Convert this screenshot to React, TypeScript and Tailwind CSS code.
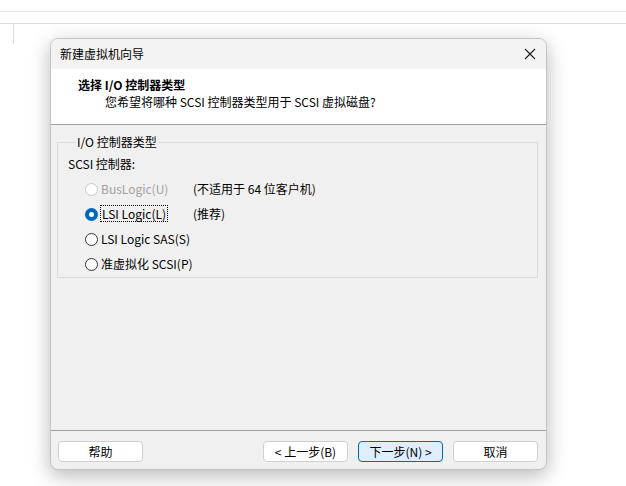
import React from "react";

const font = { fontFamily: '"Noto Sans CJK SC", "Noto Sans", sans-serif' };

function Radio({ checked, disabled }: { checked?: boolean; disabled?: boolean }) {
  if (checked) {
    return (
      <span className="w-[13px] h-[13px] rounded-full bg-[#0067c0] flex items-center justify-center shrink-0">
        <span className="w-[5px] h-[5px] rounded-full bg-white" />
      </span>
    );
  }
  return (
    <span
      className={
        "w-[13px] h-[13px] rounded-full bg-white border shrink-0 " +
        (disabled ? "border-[#c8c8c8] bg-[#f5f5f5]" : "border-[#333333]")
      }
    />
  );
}

function Btn({ children, primary }: { children: React.ReactNode; primary?: boolean }) {
  return (
    <div
      className={
        "w-[85px] h-[21px] rounded-[4px] border flex items-center justify-center text-[12px] text-black " +
        (primary ? "bg-[#e0eef9] border-[#0067c0]" : "bg-white border-[#d0d0d0]")
      }
    >
      {children}
    </div>
  );
}

export default function App() {
  return (
    <div className="w-[626px] h-[486px] bg-white overflow-hidden" style={font}>
      <div className="h-[12px] border-b border-[#e8e8e8]" />
      <div className="h-[12px] border-b border-[#dedede]" />
      <div className="flex items-start">
        <div className="ml-[13px] w-px h-[20px] bg-[#dedede]" />
        <div className="ml-[36px] mt-[14px] w-[497px] h-[432px] rounded-[8px] border border-[#c4c4c4] bg-[#f0f0f0] shadow-[0_6px_20px_rgba(0,0,0,0.28)] flex flex-col overflow-hidden">
          {/* title bar */}
          <div className="h-[30px] bg-[#f3f3f3] flex items-center justify-between pl-[9px] pr-[9px] shrink-0">
            <span className="text-[12px] text-black leading-none">新建虚拟机向导</span>
            <svg width="12" height="12" viewBox="0 0 12 12" className="mr-[1px]">
              <path d="M1 1 L11 11 M11 1 L1 11" stroke="#1a1a1a" strokeWidth="1.1" fill="none" />
            </svg>
          </div>
          {/* header */}
          <div className="h-[56px] bg-white border-b border-[#a0a0a0] pl-[27px] pt-[8px] shrink-0">
            <div className="text-[12px] font-bold text-black leading-[16px]">选择 I/O 控制器类型</div>
            <div className="text-[12px] text-black leading-[16px] pl-[27px] mt-[1px]">您希望将哪种 SCSI 控制器类型用于 SCSI 虚拟磁盘?</div>
          </div>
          {/* body */}
          <div className="flex-1 pl-[6px] pr-[8px] pt-[9px]">
            <fieldset className="w-[481px] h-[144px] border border-[#dcdcdc] pl-[10px] pt-[6px]">
              <legend className="text-[12px] text-black leading-[16px] ml-[8px] px-[1px]">I/O 控制器类型</legend>
              <div className="text-[12px] text-black leading-[16px]">SCSI 控制器:</div>
              <div className="flex flex-col mt-[9px] ml-[17px] gap-[9px]">
                <div className="flex items-center h-[16px]">
                  <Radio disabled />
                  <span className="ml-[3px] text-[12px] text-[#a0a0a0] w-[92px]">BusLogic(U)</span>
                  <span className="text-[12px] text-black">(不适用于 64 位客户机)</span>
                </div>
                <div className="flex items-center h-[16px]">
                  <Radio checked />
                  <span className="ml-[2px] text-[12px] text-black w-[93px]">
                    <span className="border border-dotted border-black px-[1px] leading-[15px] inline-block">LSI Logic(L)</span>
                  </span>
                  <span className="text-[12px] text-black">(推荐)</span>
                </div>
                <div className="flex items-center h-[16px]">
                  <Radio />
                  <span className="ml-[3px] text-[12px] text-black">LSI Logic SAS(S)</span>
                </div>
                <div className="flex items-center h-[16px]">
                  <Radio />
                  <span className="ml-[3px] text-[12px] text-black">准虚拟化 SCSI(P)</span>
                </div>
              </div>
            </fieldset>
          </div>
          {/* footer */}
          <div className="h-[39px] border-t border-[#a0a0a0] pt-[10px] pl-[7px] pr-[8px] flex items-start shrink-0">
            <Btn>帮助</Btn>
            <div className="flex-1" />
            <div className="flex gap-[10px]">
              <Btn>&lt; 上一步(B)</Btn>
              <Btn primary>下一步(N) &gt;</Btn>
              <Btn>取消</Btn>
            </div>
          </div>
        </div>
      </div>
    </div>
  );
}
